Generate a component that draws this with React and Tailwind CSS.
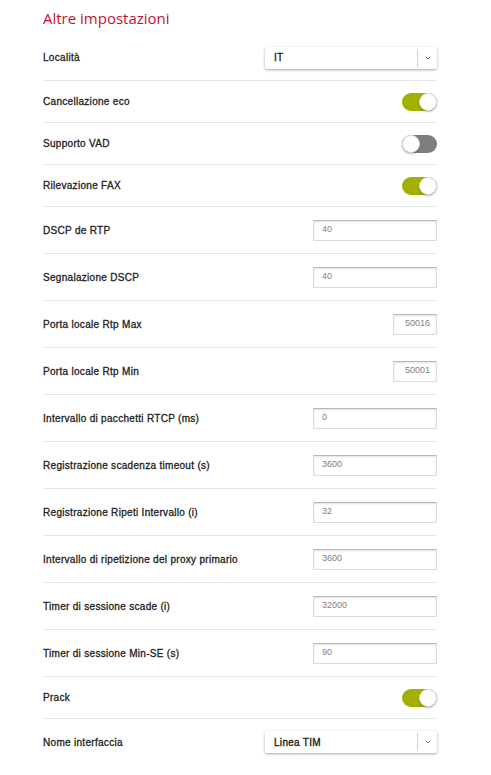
import React from 'react';

const rows = [
    { type: 'select', label: 'Località', value: 'IT' },
    { type: 'toggle', label: 'Cancellazione eco', on: true },
    { type: 'toggle', label: 'Supporto VAD', on: false },
    { type: 'toggle', label: 'Rilevazione FAX', on: true },
    { type: 'input', label: 'DSCP de RTP', value: '40' },
    { type: 'input', label: 'Segnalazione DSCP', value: '40' },
    { type: 'short', label: 'Porta locale Rtp Max', value: '50016' },
    { type: 'short', label: 'Porta locale Rtp Min', value: '50001' },
    { type: 'input', label: 'Intervallo di pacchetti RTCP (ms)', value: '0' },
    { type: 'input', label: 'Registrazione scadenza timeout (s)', value: '3600' },
    { type: 'input', label: 'Registrazione Ripeti Intervallo (i)', value: '32' },
    { type: 'input', label: 'Intervallo di ripetizione del proxy primario', value: '3600' },
    { type: 'input', label: 'Timer di sessione scade (i)', value: '32000' },
    { type: 'input', label: 'Timer di sessione Min-SE (s)', value: '90' },
    { type: 'toggle', label: 'Prack', on: true },
    { type: 'select', label: 'Nome interfaccia', value: 'Linea TIM', last: true },
];

function Toggle({ on }) {
    return (
        <div className={`relative w-[35px] h-[18px] rounded-full ${on ? 'bg-[#a4b000]' : 'bg-[#7d7d7d]'}`}>
            <div
                className={`absolute top-0 w-[18px] h-[18px] rounded-full bg-white border border-[#e4e4e4] shadow-[0_1px_2px_rgba(0,0,0,0.3)] ${on ? 'right-0' : 'left-0'}`}
            />
        </div>
    );
}

function Select({ value }) {
    return (
        <div className="w-[172px] h-[22px] flex items-center bg-white rounded-[2px] shadow-[0_1px_3px_rgba(0,0,0,0.35)]">
            <div className="flex-1 pl-[9px] text-[10px] tracking-[0.3px] text-[#222] [-webkit-text-stroke:0.35px_#222]">{value}</div>
            <div className="w-px h-[18px] bg-[#d4d4d4]" />
            <div className="w-[19px] flex items-center justify-center">
                <svg width="6" height="4" viewBox="0 0 6 4" fill="none">
                    <path d="M0.8 0.8 L3 3 L5.2 0.8" stroke="#777" strokeWidth="1" />
                </svg>
            </div>
        </div>
    );
}

function Input({ value, short }) {
    return (
        <div
            className={`${short ? 'w-[44px] justify-end pr-[6px]' : 'w-[124px] pl-[8px]'} h-[21px] flex items-center bg-white border border-[#dcdcdc] border-t-[#b8b8b8] shadow-[inset_0_1px_2px_rgba(0,0,0,0.12)] text-[9px] text-[#808080]`}
        >
            {value}
        </div>
    );
}

export default function App() {
    return (
        <div className="w-[491px] min-h-[775px] bg-white font-['Liberation_Sans',sans-serif]">
            <div className="ml-[43px] w-[394px]">
                <h2 className="h-[35px] pt-[8px] text-[15px] leading-[20px] font-medium text-[#c8102e] font-['Open_Sans',sans-serif]">
                    Altre impostazioni
                </h2>
                {rows.map((r) => {
                    const h = r.type === 'toggle' ? 'h-[42px]' : r.type === 'select' ? 'h-[46px]' : 'h-[47px]';
                    return (
                        <div
                            key={r.label}
                            className={`${h} flex items-center justify-between ${r.last ? '' : 'border-b border-[#e6e6e6]'}`}
                        >
                            <span className="text-[10px] tracking-[0.3px] text-[#222] [-webkit-text-stroke:0.3px_#222]">{r.label}</span>
                            {r.type === 'toggle' && <Toggle on={r.on} />}
                            {r.type === 'select' && <Select value={r.value} />}
                            {r.type === 'input' && <Input value={r.value} />}
                            {r.type === 'short' && <Input value={r.value} short />}
                        </div>
                    );
                })}
            </div>
        </div>
    );
}
